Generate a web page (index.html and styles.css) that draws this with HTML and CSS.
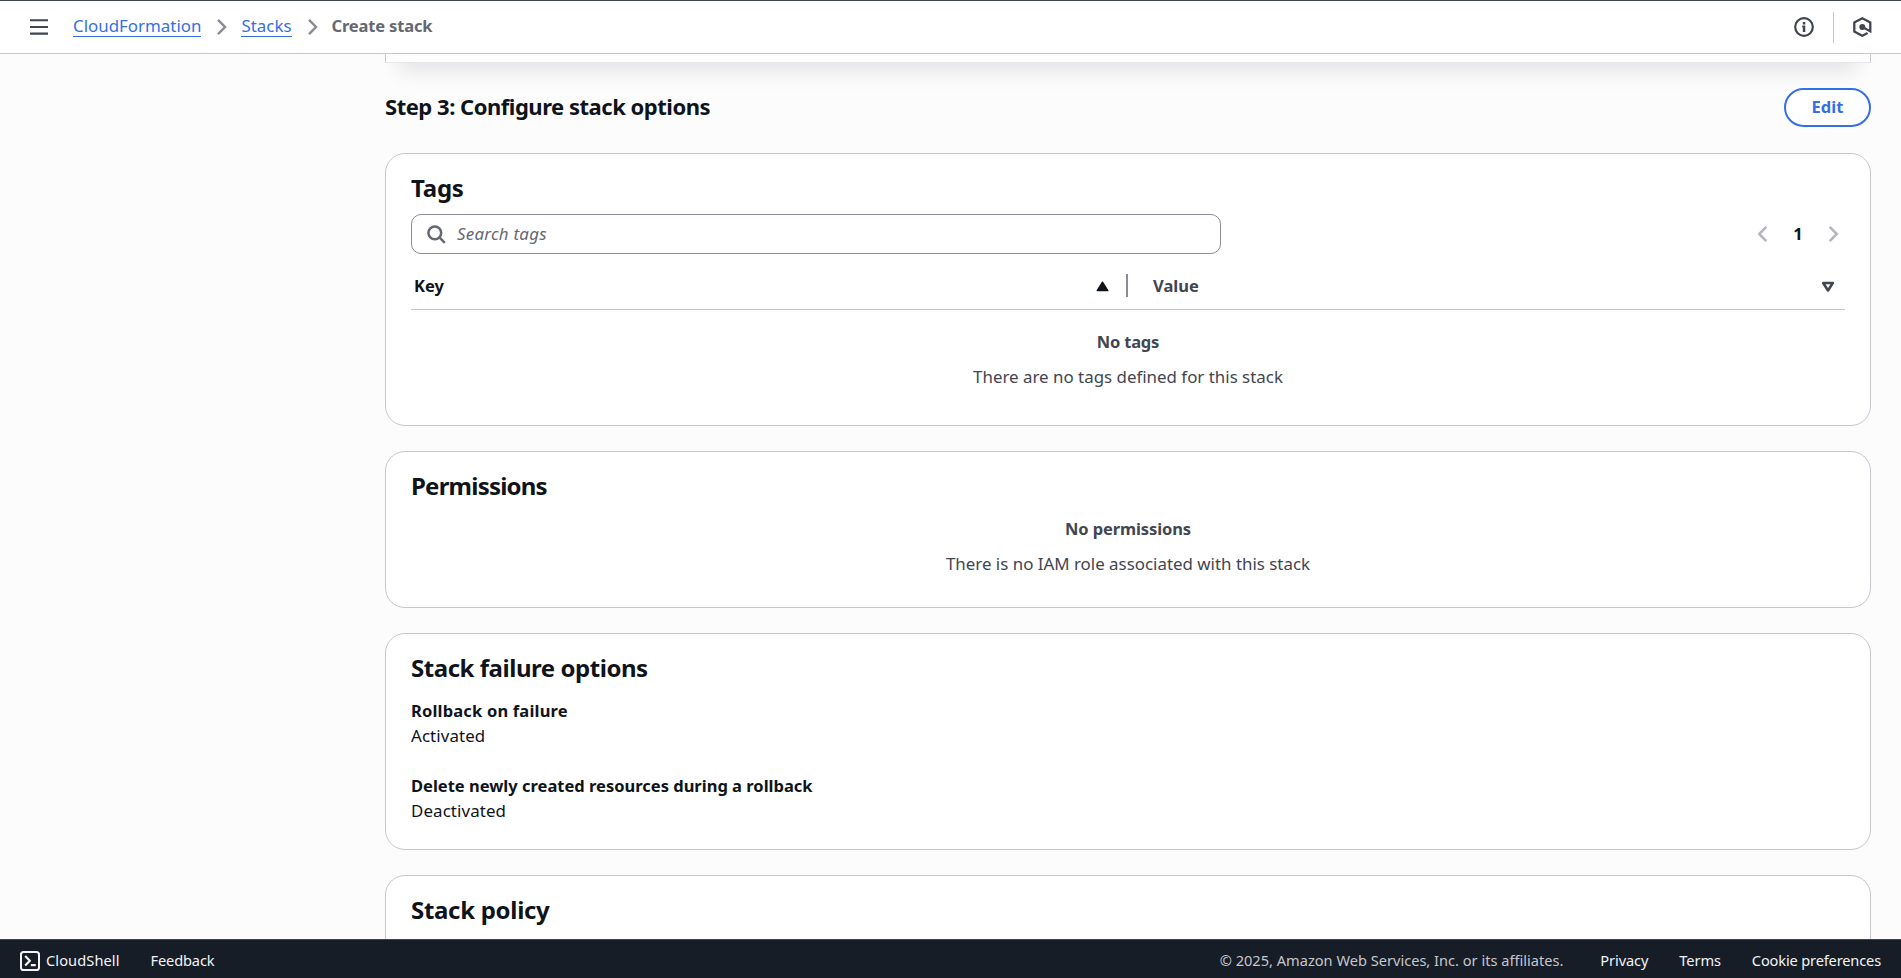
FILE: index.html
```html
<!DOCTYPE html>
<html lang="en">
<head>
<meta charset="utf-8">
<title>Create stack</title>
<link rel="stylesheet" href="styles.css">
</head>
<body>
<header class="topbar">
  <svg class="menu" width="18" height="16" viewBox="0 0 18 16" fill="none" stroke="#424650" stroke-width="2.1"><path d="M0 1.2h18M0 8h18M0 14.6h18"/></svg>
  <nav class="crumbs">
    <a class="crumb-link" href="#">CloudFormation</a>
    <svg class="crumb-chevron" width="12" height="18" viewBox="0 0 12 18" fill="none" stroke="#8c8c94" stroke-width="2.5"><path d="M2 1.8l7 7.2-7 7.2"/></svg>
    <a class="crumb-link" href="#">Stacks</a>
    <svg class="crumb-chevron" width="12" height="18" viewBox="0 0 12 18" fill="none" stroke="#8c8c94" stroke-width="2.5"><path d="M2 1.8l7 7.2-7 7.2"/></svg>
    <span class="crumb-current">Create stack</span>
  </nav>
  <div class="tools">
    <svg class="tool-info" width="20" height="20" viewBox="0 0 20 20"><circle cx="10" cy="10" r="8.8" fill="none" stroke="#424650" stroke-width="2.2"/><path d="M8.8 5h2.5v2.4H8.8zM8.2 8.6h3.1v6.4H8.8v-4.4h-.6z" fill="#424650"/></svg>
    <span class="tool-divider"></span>
    <svg class="tool-hex" width="19" height="20" viewBox="0 0 19 20" fill="none" stroke="#424650" stroke-width="2.3"><path d="M14.6 16.1L9.3 18.8 1.3 14.6V5.4L9.3 1.3l8 4.1v9L9.5 10"/><circle cx="9.3" cy="10" r="3" fill="#424650" stroke="none"/></svg>
  </div>
</header>
<main class="content">
  <div class="prev-card"></div>
  <div class="step-head">
    <h2 class="step-title">Step 3: Configure stack options</h2>
    <button class="edit-button">Edit</button>
  </div>

  <section class="card card-tags">
    <h3 class="card-title title-tags">Tags</h3>
    <div class="filter-row">
      <div class="search">
        <svg width="19" height="19" viewBox="0 0 19 19" fill="none" stroke="#656871" stroke-width="2.5"><circle cx="7.8" cy="7.8" r="6.4"/><path d="M12.2 12.2l5.6 5.6"/></svg>
        <span class="search-placeholder">Search tags</span>
      </div>
      <div class="pager">
        <svg width="11" height="18" viewBox="0 0 11 18" fill="none" stroke="#b4b4bb" stroke-width="2.5"><path d="M9.3 1.8L2.2 9l7.1 7.2"/></svg>
        <span class="page-number">1</span>
        <svg width="11" height="18" viewBox="0 0 11 18" fill="none" stroke="#b4b4bb" stroke-width="2.5"><path d="M1.7 1.8L8.8 9l-7.1 7.2"/></svg>
      </div>
    </div>
    <div class="table-head">
      <div class="col-key"><span>Key</span>
        <svg class="sort-asc" width="13" height="11" viewBox="0 0 13 11"><path d="M6.5 1.2L11.8 9.6H1.2z" fill="#0f141a" stroke="#0f141a" stroke-width="1.4" stroke-linejoin="round"/></svg>
      </div>
      <span class="col-divider"></span>
      <div class="col-value"><span>Value</span>
        <svg class="sort-none" width="14" height="12" viewBox="0 0 14 12"><path d="M2.2 2h9.6L7 9.5z" fill="none" stroke="#424650" stroke-width="2.6" stroke-linejoin="round"/></svg>
      </div>
    </div>
    <div class="empty">
      <div class="empty-title no-tags">No tags</div>
      <div class="empty-text">There are no tags defined for this stack</div>
    </div>
  </section>

  <section class="card card-permissions">
    <h3 class="card-title title-permissions">Permissions</h3>
    <div class="empty">
      <div class="empty-title">No permissions</div>
      <div class="empty-text">There is no IAM role associated with this stack</div>
    </div>
  </section>

  <section class="card card-failure">
    <h3 class="card-title title-failure">Stack failure options</h3>
    <dl class="pairs">
      <div><dt class="dt-rollback">Rollback on failure</dt><dd>Activated</dd></div>
      <div><dt>Delete newly created resources during a rollback</dt><dd>Deactivated</dd></div>
    </dl>
  </section>

  <section class="card card-policy">
    <h3 class="card-title title-policy">Stack policy</h3>
  </section>
</main>
<footer class="footer">
  <svg class="shell-icon" width="20" height="20" viewBox="0 0 20 20" fill="none" stroke="#f3f3f7" stroke-width="2"><rect x="1" y="1" width="18" height="18" rx="2.6"/><path d="M5.2 5l4.6 4.8-4.6 4.8M10.8 14.2h5" stroke-width="2.2"/></svg>
  <span class="foot-shell">CloudShell</span>
  <span class="foot-feedback">Feedback</span>
  <span class="foot-copy">© 2025, Amazon Web Services, Inc. or its affiliates.</span>
  <span class="foot-link">Privacy</span>
  <span class="foot-link">Terms</span>
  <span class="foot-link foot-cookie">Cookie preferences</span>
</footer>
</body>
</html>
```
FILE: styles.css
```css
* { box-sizing: border-box; }
body {
  margin: 0;
  height: 978px;
  display: flex;
  flex-direction: column;
  overflow: hidden;
  background: #fcfcfd;
  color: #0f141a;
  font: 16.9px/25px "Noto Sans", "Open Sans", sans-serif;
  white-space: nowrap;
}
h2, h3, dl, dt, dd { margin: 0; }
svg { display: block; flex: none; }

.topbar {
  flex: none;
  height: 54px;
  display: flex;
  align-items: center;
  padding: 0 29px 0 30px;
  background: #fff;
  border-top: 1px solid #424650;
  border-bottom: 1px solid #c6c6cd;
}
.crumbs { display: flex; align-items: center; margin-left: 25px; }
.crumb-link {
  height: 24px;
  margin-bottom: 4px;
  line-height: 26px;
  color: #356fe5;
  text-decoration: none;
  border-bottom: 1px solid #356fe5;
}
.crumb-chevron { margin: 0 13px 0 15px; }
.crumb-current { margin-bottom: 4px; font-size: 16.5px; font-weight: 700; letter-spacing: -0.15px; color: #656871; }
.tools { display: flex; align-items: center; margin-left: auto; }
.tool-divider { width: 1px; height: 31px; margin: 0 19px; background: #c6c6cd; }

.content { flex: 1; min-height: 0; overflow: hidden; padding: 0 30px 0 385px; }
.prev-card {
  height: 109px;
  margin-top: -100px;
  background: #fff;
  border: 1px solid #c6c6cd;
  border-bottom-color: #e6e7ea;
  box-shadow: 0 22px 20px -14px rgba(0, 7, 22, 0.1);
}
.step-head {
  display: flex;
  justify-content: space-between;
  align-items: center;
  height: 39px;
  margin: 25px 0 26px;
}
.step-title { margin-bottom: 3px; font-size: 22px; line-height: 30px; font-weight: 700; letter-spacing: -0.48px; }
.edit-button {
  width: 87px;
  height: 39px;
  padding: 0 0 1px;
  border: 2px solid #356fe5;
  border-radius: 20px;
  background: #fff;
  color: #356fe5;
  font: 700 16.5px/34px "Noto Sans", sans-serif;
}

.card {
  margin-bottom: 25px;
  padding: 19px 25px 0;
  background: #fff;
  border: 1px solid #c6c6cd;
  border-radius: 20px;
}
.card-title { font-size: 24px; line-height: 30px; font-weight: 700; }
.title-tags { letter-spacing: -0.2px; }
.title-permissions { letter-spacing: -0.78px; }
.title-failure { letter-spacing: -0.46px; }
.title-policy { letter-spacing: -0.3px; }
.card-tags { height: 273px; }
.card-permissions { height: 157px; }
.card-failure { height: 217px; }
.card-policy { height: 200px; }

.filter-row { display: flex; justify-content: space-between; align-items: center; margin-top: 11px; }
.search {
  width: 810px;
  height: 40px;
  display: flex;
  align-items: center;
  gap: 11px;
  padding: 0 15px;
  border: 1px solid #8c8c94;
  border-radius: 10px;
}
.search-placeholder { color: #656871; font-style: italic; letter-spacing: 0.25px; margin-bottom: 1px; }
.pager { display: flex; align-items: center; padding-right: 6px; }
.page-number { width: 60px; margin-bottom: 1px; text-align: center; font-size: 16.5px; font-weight: 700; }

.table-head {
  display: flex;
  align-items: center;
  height: 56px;
  padding: 18px 10px 11px 3px;
  border-bottom: 1px solid #c6c6cd;
  font-size: 16.5px;
  font-weight: 700;
}
.col-key, .col-value { display: flex; justify-content: space-between; align-items: center; }
.col-key { width: 695px; }
.col-divider { width: 2px; height: 23px; margin: 0 25px 0 17px; background: #8c8c94; }
.col-value { flex: 1; color: #424650; }
.sort-asc { margin-top: 2px; }
.sort-none { margin-top: 4px; }

.empty { display: flex; flex-direction: column; align-items: center; gap: 10px; margin-top: 15px; color: #424650; }
.card-tags .empty { margin-top: 19px; }
.empty-title { font-size: 16.5px; font-weight: 700; letter-spacing: -0.1px; }
.empty-title.no-tags { letter-spacing: -0.2px; }

.pairs { display: grid; gap: 25px; margin-top: 15px; }
.pairs dt { font-size: 16.5px; font-weight: 700; }
.dt-rollback { letter-spacing: 0.18px; }
.pairs dd { letter-spacing: 0.1px; }

.footer {
  flex: none;
  height: 39px;
  display: flex;
  align-items: center;
  padding: 3px 20px 0;
  background: #161d26;
  border-top: 1px solid #424650;
  color: #f3f3f7;
  font-size: 14.6px;
}
.foot-shell { margin-left: 6px; letter-spacing: 0.1px; }
.foot-feedback { margin-left: 31px; letter-spacing: -0.15px; }
.foot-copy { margin-left: auto; margin-right: 6px; color: #c6c6cd; }
.foot-link { margin-left: 31px; letter-spacing: -0.1px; }
.foot-cookie { letter-spacing: -0.15px; }
```
